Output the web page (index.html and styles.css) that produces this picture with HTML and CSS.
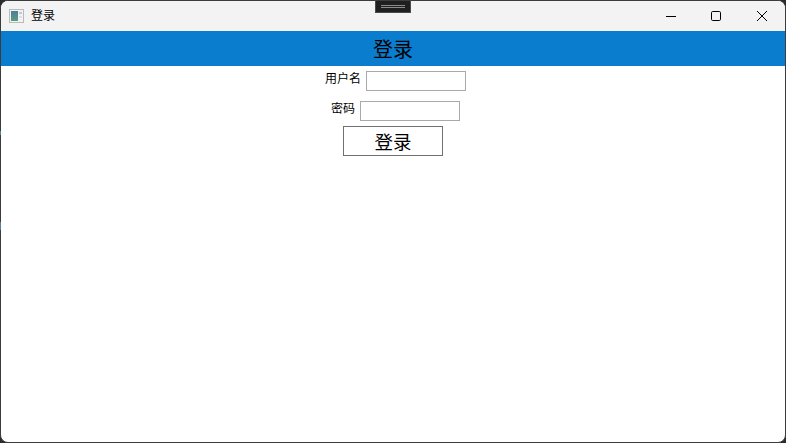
FILE: index.html
```html
<!DOCTYPE html>
<html lang="zh-CN">
<head>
<meta charset="utf-8">
<title>登录</title>
<link rel="stylesheet" href="styles.css">
</head>
<body>
<div class="window">
  <header class="titlebar">
    <svg class="app-icon" width="16" height="16" viewBox="0 0 16 16">
      <rect x="0.5" y="1.5" width="14" height="13" fill="#f1f3f3" stroke="#b8bcbc"/>
      <defs><linearGradient id="pane" x1="0" y1="0" x2="0" y2="1"><stop offset="0" stop-color="#4a7f9c"/><stop offset="1" stop-color="#5f9a80"/></linearGradient></defs>
      <rect x="2" y="3" width="7" height="10" fill="url(#pane)"/>
      <rect x="10" y="4" width="3" height="2" fill="#c3cccc"/>
      <rect x="10" y="8" width="3" height="2" fill="#dbe0e0"/>
    </svg>
    <span class="title-text">登录</span>
    <div class="controls">
      <button class="control control-min" aria-label="最小化"><svg width="10" height="10" viewBox="0 0 10 10"><path d="M0 5.5H10" stroke="#000" fill="none"/></svg></button>
      <button class="control" aria-label="最大化"><svg width="10" height="10" viewBox="0 0 10 10"><rect x="0.5" y="0.5" width="9" height="9" rx="1.2" stroke="#000" fill="none"/></svg></button>
      <button class="control" aria-label="关闭"><svg width="10" height="10" viewBox="0 0 10 10"><path d="M0 0L10 10M10 0L0 10" stroke="#000" fill="none"/></svg></button>
    </div>
  </header>
  <div class="banner">登录</div>
  <form class="form">
    <div class="row row-first">
      <label class="label" for="user">用户名</label>
      <input class="field" id="user" type="text">
    </div>
    <div class="row row-second">
      <label class="label" for="pass">密码</label>
      <input class="field" id="pass" type="password">
    </div>
    <button class="submit" type="button">登录</button>
  </form>
</div>
<div class="snap-handle"><span class="snap-lines"></span></div>
<span class="edge-glint edge-glint-a"></span>
<span class="edge-glint edge-glint-b"></span>
</body>
</html>
```
FILE: styles.css
```css
* { box-sizing: border-box; }
html, body { margin: 0; height: 100%; background: #2b2b2b; overflow: hidden; }
body { font-family: "Noto Sans CJK SC", "Liberation Sans", sans-serif; color: #000; }
.window {
  height: 443px;
  border: 1px solid #3c3c3c;
  border-radius: 8px;
  background: #fff;
  overflow: hidden;
  display: flex;
  flex-direction: column;
}
.titlebar {
  height: 30px;
  flex: none;
  background: #f3f3f3;
  display: flex;
  align-items: center;
  padding-left: 8px;
}
.app-icon { flex: none; margin-bottom: 1px; }
.title-text { margin-left: 6px; padding-bottom: 2px; font-size: 12px; line-height: 16px; }
.controls { margin-left: auto; display: flex; height: 100%; }
.control {
  width: 46px;
  height: 30px;
  padding: 0;
  border: 0;
  background: transparent;
  display: flex;
  align-items: center;
  justify-content: center;
}
.control-min { width: 44px; }
.banner {
  height: 35px;
  flex: none;
  background: #0a7dcf;
  font-size: 20px;
  line-height: 35px;
  text-align: center;
}
.form { display: flex; flex-direction: column; align-items: center; }
.row { display: flex; align-items: flex-start; gap: 5px; height: 20px; padding-left: 5px; }
.row-first { margin-top: 5px; }
.row-second { margin-top: 10px; }
.label { font-size: 12px; line-height: 14px; }
.field {
  width: 100px;
  height: 20px;
  padding: 0 2px;
  border: 1px solid #a9a9a9;
  background: #fff;
  outline: 0;
}
.submit {
  width: 100px;
  height: 30px;
  margin-top: 5px;
  padding: 0;
  border: 1px solid #707070;
  background: #fff;
  font: inherit;
  font-size: 18.5px;
  line-height: 28px;
  color: #000;
}
.snap-handle {
  position: absolute;
  top: 0;
  left: 375px;
  width: 36px;
  height: 13px;
  background: #1f1f1f;
  border: 1px solid #4a4a4a;
  border-top-color: #3c3c3c;
  display: flex;
  justify-content: center;
  padding-top: 4px;
}
.snap-lines {
  display: block;
  width: 24px;
  height: 3px;
  border-top: 1px solid #8c8c8c;
  border-bottom: 1px solid #8c8c8c;
}
.edge-glint { position: absolute; left: 0; width: 1px; background: #4f8199; }
.edge-glint-a { top: 131px; height: 4px; }
.edge-glint-b { top: 222px; height: 8px; }
```
